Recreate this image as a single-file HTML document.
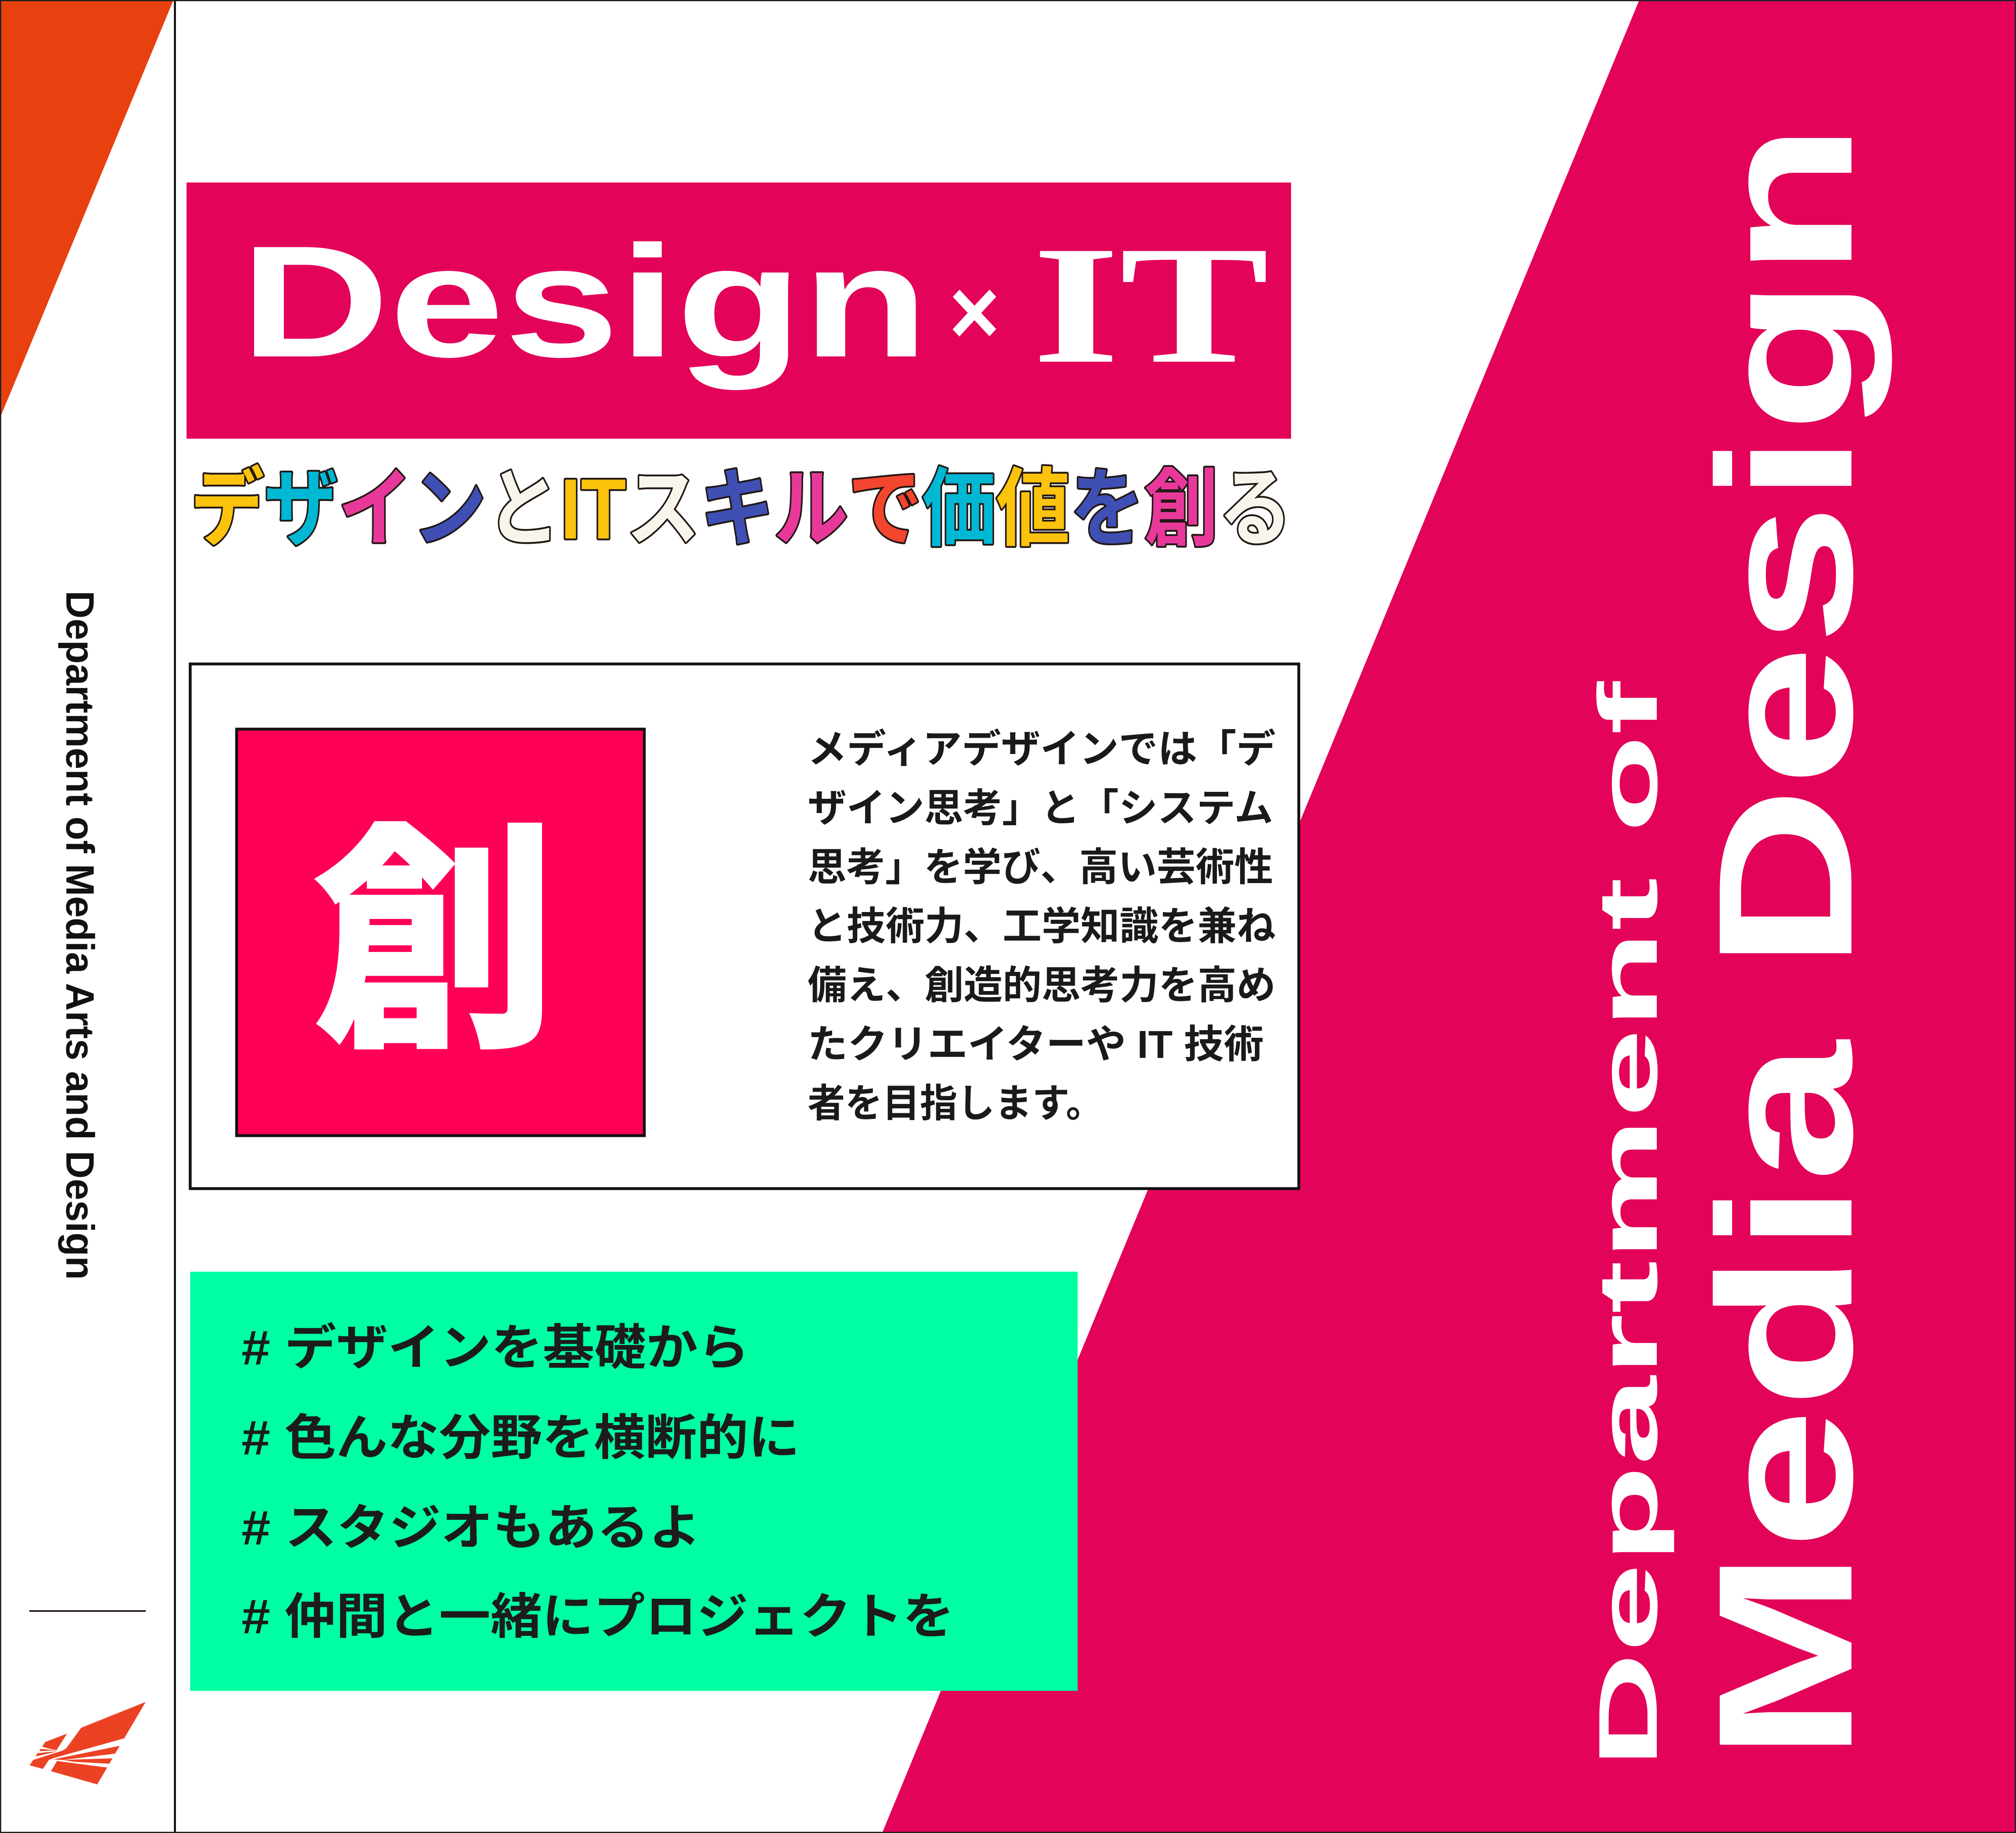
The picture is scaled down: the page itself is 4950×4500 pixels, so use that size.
<!DOCTYPE html>
<html><head><meta charset="utf-8"><style>
html,body{margin:0;padding:0;background:#fff}
svg{display:block}
</style></head><body>
<svg width="4950" height="4500" viewBox="0 0 4950 4500" xmlns="http://www.w3.org/2000/svg">
<rect x="0" y="0" width="4950" height="4500" fill="#fff"/>
<polygon points="4025,0 4950,0 4950,4500 2166,4500" fill="#e30359"/>
<polygon points="0,0 426,0 0,1026" fill="#e8400f"/>
<rect x="427" y="0" width="5" height="4500" fill="#111"/>
<rect x="1.5" y="1.5" width="4947" height="4497" fill="none" stroke="#222" stroke-width="3"/>

<!-- Design x IT -->
<rect x="458" y="448" width="2712" height="629" fill="#e30359"/>
<text x="590" y="875" font-family="Liberation Sans, sans-serif" font-weight="bold" font-size="390" fill="#fff" textLength="1690" lengthAdjust="spacingAndGlyphs">Design</text>
<text x="2330" y="845" font-family="Liberation Sans, sans-serif" font-weight="bold" font-size="230" fill="#fff" textLength="125" lengthAdjust="spacingAndGlyphs">×</text>
<text x="2535" y="888" font-family="Liberation Serif, serif" font-weight="bold" font-size="415" fill="#fff" textLength="581" lengthAdjust="spacingAndGlyphs">IT</text>

<!-- colorful subtitle -->
<g font-family="Liberation Sans, 'Noto Sans CJK JP', sans-serif" font-weight="bold" font-size="210" stroke="#231815" stroke-width="9" paint-order="stroke" stroke-linejoin="round">
<text x="467" y="1322" textLength="2706" lengthAdjust="spacingAndGlyphs"><tspan fill="#fcc30d">デ</tspan><tspan fill="#00b8d4">ザ</tspan><tspan fill="#e8399b">イ</tspan><tspan fill="#3f4fb3">ン</tspan><tspan fill="#f8f5ec">と</tspan><tspan fill="#fcc30d">IT</tspan><tspan fill="#f8f5ec">ス</tspan><tspan fill="#3f4fb3">キ</tspan><tspan fill="#e8399b">ル</tspan><tspan fill="#f4452f">で</tspan><tspan fill="#00b8d4">価</tspan><tspan fill="#fcc30d">値</tspan><tspan fill="#3f4fb3">を</tspan><tspan fill="#e8399b">創</tspan><tspan fill="#f8f5ec">る</tspan></text>
</g>

<!-- bordered box -->
<rect x="467" y="1630" width="2722" height="1288" fill="#fff" stroke="#111" stroke-width="7"/>
<rect x="581" y="1790" width="1001" height="998" fill="#ff0059" stroke="#111" stroke-width="7"/>
<text x="1065" y="2520" text-anchor="middle" font-family="'Noto Sans CJK JP', sans-serif" font-weight="900" font-size="600" fill="#fff">創</text>

<g font-family="Liberation Sans, 'Noto Sans CJK JP', sans-serif" font-weight="bold" font-size="96" fill="#1a1a1a">
<text x="1983" y="1872" textLength="1149" lengthAdjust="spacingAndGlyphs">メディアデザインでは「デ</text>
<text x="1983" y="2017" textLength="1143" lengthAdjust="spacingAndGlyphs">ザイン思考」と「システム</text>
<text x="1983" y="2162" textLength="1143" lengthAdjust="spacingAndGlyphs">思考」を学び、高い芸術性</text>
<text x="1983" y="2307" textLength="1149" lengthAdjust="spacingAndGlyphs">と技術力、工学知識を兼ね</text>
<text x="1983" y="2452" textLength="1149" lengthAdjust="spacingAndGlyphs">備え、創造的思考力を高め</text>
<text x="1983" y="2597" textLength="1120" lengthAdjust="spacingAndGlyphs">たクリエイターや IT 技術</text>
<text x="1983" y="2742" textLength="726" lengthAdjust="spacingAndGlyphs">者を目指します。</text>
</g>

<!-- green box -->
<rect x="467" y="3122" width="2179" height="1029" fill="#00ffa3"/>
<g font-family="Liberation Sans, 'Noto Sans CJK JP', sans-serif" font-weight="bold" font-size="120" fill="#1c1c1c">
<text x="593" y="3350" textLength="1247" lengthAdjust="spacingAndGlyphs"># デザインを基礎から</text>
<text x="593" y="3571" textLength="1371" lengthAdjust="spacingAndGlyphs"># 色んな分野を横断的に</text>
<text x="593" y="3792" textLength="1128" lengthAdjust="spacingAndGlyphs"># スタジオもあるよ</text>
<text x="593" y="4010" textLength="1750" lengthAdjust="spacingAndGlyphs"># 仲間と一緒にプロジェクトを</text>
</g>

<!-- left vertical text -->
<text transform="translate(163,1450) rotate(90)" font-family="Liberation Sans, sans-serif" font-weight="bold" font-size="97" fill="#111" textLength="1692" lengthAdjust="spacingAndGlyphs">Department of Media Arts and Design</text>
<rect x="72" y="3953" width="286" height="4" fill="#231815"/>

<!-- logo -->
<g transform="translate(0,3900) scale(0.3333)" fill="#ec4224">
<path d="M598,1025 L1073,835 L915,1103 L395,1248 L360,1262 L316,1328 L218,1302 L245,1262 L440,1200 Q480,1190 500,1160 Z"/>
<path d="M333,1130 L494,1068 L415,1192 L310,1165 Z"/>
<path d="M300,1180 L410,1192 L290,1197 Z"/>
<path d="M275,1212 L430,1198 L262,1236 Z"/>
<path d="M392,1258 L882,1158 L848,1216 L460,1262 Z"/>
<path d="M465,1262 L828,1250 L806,1290 L540,1275 Z"/>
<path d="M375,1345 L420,1270 L790,1318 L716,1442 Z"/>
</g>

<!-- right big text -->
<text transform="translate(4068,4341) rotate(-90)" font-family="Liberation Sans, sans-serif" font-weight="bold" font-size="205" fill="#fff" textLength="2668" lengthAdjust="spacingAndGlyphs">Department of</text>
<text transform="translate(4546,4325) rotate(-90)" font-family="Liberation Sans, sans-serif" font-weight="bold" font-size="470" fill="#fff" textLength="4025" lengthAdjust="spacingAndGlyphs">Media Design</text>
</svg>
</body></html>
